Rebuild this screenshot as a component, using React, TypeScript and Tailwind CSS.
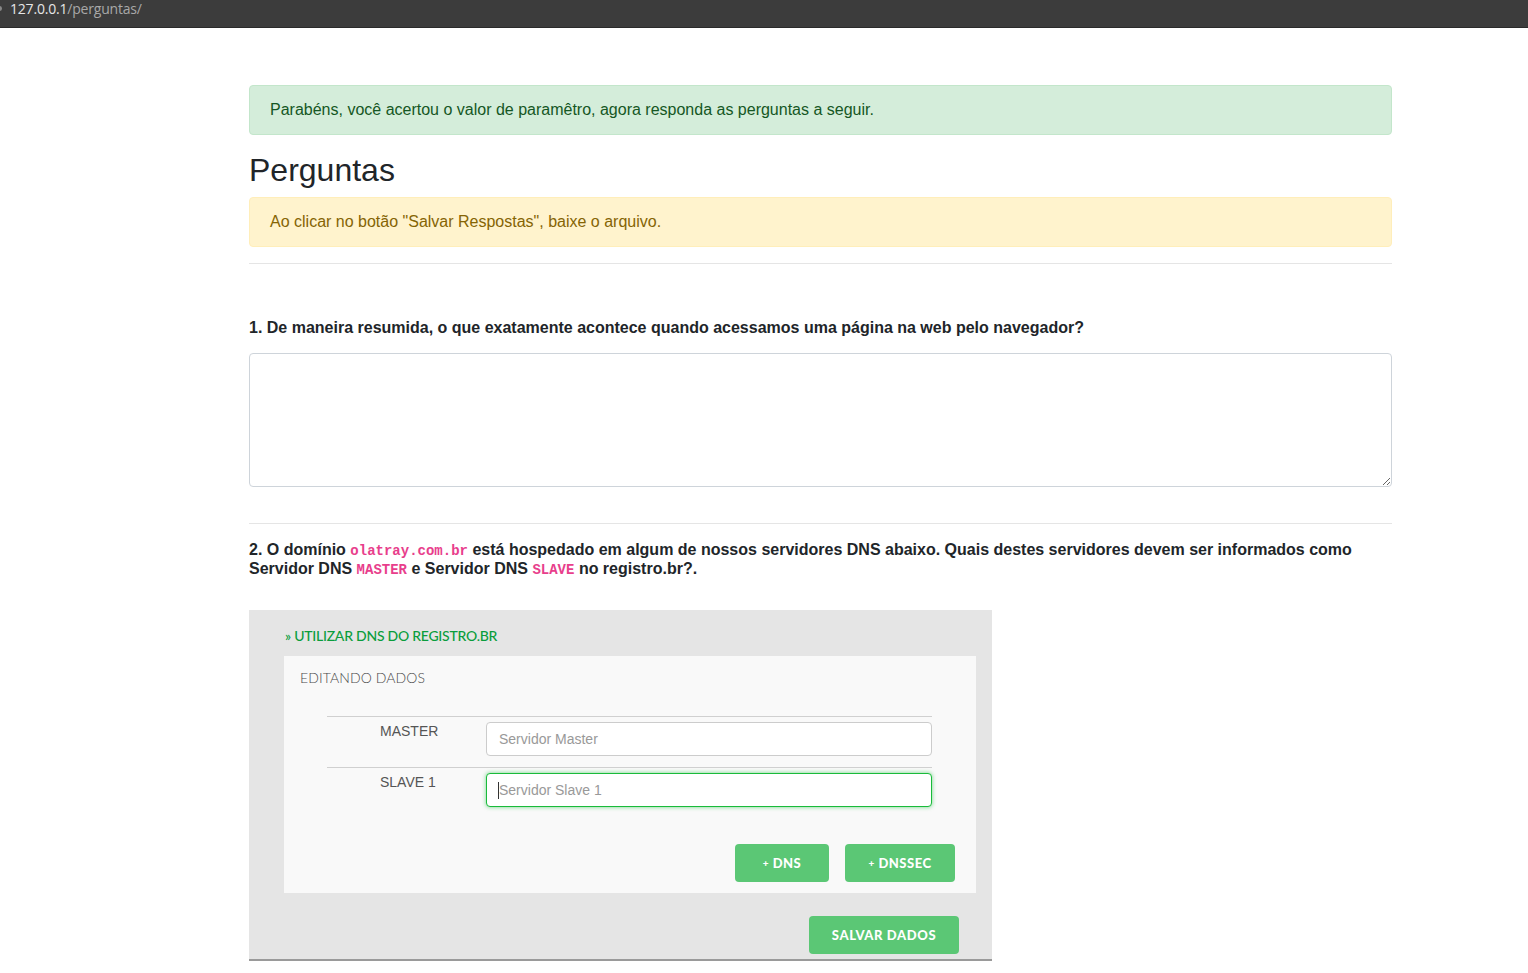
import React from "react";

export default function App() {
  const mono = { fontFamily: '"Liberation Mono", monospace' };
  return (
    <div className="min-h-[973px] bg-white" style={{ fontFamily: '"Liberation Sans", Arial, sans-serif' }}>
      <div className="relative h-[28px] bg-[#3c3c3c] border-b border-[#2a2a2a] overflow-hidden">
        <div className="absolute left-[-3px] top-[6px] w-[5px] h-[5px] rounded-full bg-[#888]" />
        <div className="pl-[10px] pt-[1px] leading-[16px] text-[14px] tracking-[-0.2px]" style={{ fontFamily: '"Open Sans", sans-serif' }}>
          <span className="text-[#e6e6e6]">127.0.0.1</span>
          <span className="text-[#a8a8a8]">/perguntas/</span>
        </div>
      </div>

      <div className="ml-[249px] w-[1143px] pt-[57px] text-[16px] text-[#212529]">
        <div className="rounded-[4px] border border-[#c3e6cb] bg-[#d4edda] px-[20px] py-[12px] leading-[24px] text-[#155724]">
          Parabéns, você acertou o valor de paramêtro, agora responda as perguntas a seguir.
        </div>
        <h2 className="mt-[16px] mb-[8px] text-[32px] leading-[38px] font-normal text-[#212529]">Perguntas</h2>
        <div className="rounded-[4px] border border-[#ffeeba] bg-[#fff3cd] px-[20px] py-[12px] leading-[24px] text-[#856404]">
          Ao clicar no botão "Salvar Respostas", baixe o arquivo.
        </div>
        <div className="mt-[16px] border-t border-[#e5e5e5]" />

        <div className="pt-[54px]">
          <div className="font-bold leading-[19px] text-[16px]">
            1. De maneira resumida, o que exatamente acontece quando acessamos uma página na web pelo navegador?
          </div>
          <textarea className="mt-[16px] block w-full h-[134px] rounded-[4px] border border-[#ced4da] bg-white" />
        </div>

        <div className="mt-[36px] border-t border-[#e5e5e5]" />

        <div className="pt-[16px]">
          <div className="font-bold leading-[19px] text-[16px]">
            2. O domínio{" "}
            <code className="text-[14px] leading-none text-[#e83e8c]" style={mono}>olatray.com.br</code>{" "}
            está hospedado em algum de nossos servidores DNS abaixo. Quais destes servidores devem ser informados como Servidor DNS{" "}
            <code className="text-[14px] leading-none text-[#e83e8c]" style={mono}>MASTER</code>{" "}
            e Servidor DNS{" "}
            <code className="text-[14px] leading-none text-[#e83e8c]" style={mono}>SLAVE</code>{" "}
            no registro.br?.
          </div>

          <div className="mt-[32px] w-[743px] bg-[#e5e5e5] border-b-2 border-[#9a9a9a] pt-[17px] pb-[5px] pl-[35px] pr-[16px]" style={{ fontFamily: 'Lato, sans-serif' }}>
            <div className="text-[14px] leading-[18px] text-[#0a9d3c] pl-[1px] tracking-[-0.25px] font-medium">» UTILIZAR DNS DO REGISTRO.BR</div>
            <div className="mt-[11px] bg-[#f9f9f9] pt-[13px] pb-[11px] px-[16px]">
              <div className="text-[14px] leading-[18px] text-[#4a4a4a] font-light tracking-[0.1px]">EDITANDO DADOS</div>
              <div className="mt-[29px] ml-[27px] w-[605px]">
                <div className="flex border-t border-[#d0d0d0] pt-[5px] pb-[11px]" style={{ fontFamily: '"Liberation Sans", Arial, sans-serif' }}>
                  <div className="w-[159px] pl-[53px] text-[14px] leading-[18px] text-[#555]">MASTER</div>
                  <input
                    readOnly
                    placeholder="Servidor Master"
                    className="h-[34px] flex-1 rounded-[4px] border border-[#ccc] bg-white px-[12px] text-[14px] placeholder:text-[#999] outline-none"
                  />
                </div>
                <div className="flex border-t border-[#d0d0d0] pt-[5px]" style={{ fontFamily: '"Liberation Sans", Arial, sans-serif' }}>
                  <div className="w-[159px] pl-[53px] text-[14px] leading-[18px] text-[#555]">SLAVE 1</div>
                  <div className="relative flex-1">
                    <input
                      readOnly
                      placeholder="Servidor Slave 1"
                      className="h-[34px] w-full rounded-[4px] border border-[#19bb3a] bg-white px-[12px] text-[14px] placeholder:text-[#999] outline-none shadow-[0_0_4px_rgba(25,187,58,0.6)]"
                    />
                    <div className="absolute left-[12px] top-[9px] w-px h-[17px] bg-[#333]" />
                  </div>
                </div>
              </div>
              <div className="mt-[37px] flex justify-end gap-[16px] pr-[5px]">
                <button className="h-[38px] w-[94px] rounded-[4px] bg-[#5bc775] text-white text-[13px] font-black leading-none tracking-[0.5px]">
                  <span className="text-[10px] align-[1px]">+</span> DNS
                </button>
                <button className="h-[38px] w-[110px] rounded-[4px] bg-[#5bc775] text-white text-[13px] font-black leading-none tracking-[0.5px]">
                  <span className="text-[10px] align-[1px]">+</span> DNSSEC
                </button>
              </div>
            </div>
            <div className="mt-[23px] flex justify-end pr-[17px]">
              <button className="h-[38px] w-[150px] rounded-[4px] bg-[#5bc775] text-white text-[13px] font-black leading-none tracking-[0.6px]">
                SALVAR DADOS
              </button>
            </div>
          </div>
        </div>
      </div>
    </div>
  );
}
